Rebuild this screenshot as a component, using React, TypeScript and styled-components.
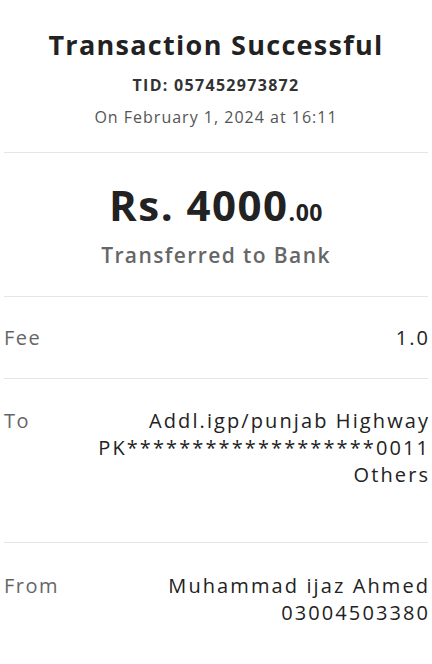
import React from "react";
import styled, { createGlobalStyle } from "styled-components";

const GlobalStyle = createGlobalStyle`
  html, body {
    margin: 0;
    padding: 0;
    background: #ffffff;
  }
  body {
    font-family: "Open Sans", "Liberation Sans", sans-serif;
    color: #222222;
  }
`;

const rows = [
  { label: "Fee", lines: ["1.0"], tall: false },
  {
    label: "To",
    lines: ["Addl.igp/punjab Highway", "PK*******************0011", "Others"],
    tall: true,
  },
  { label: "From", lines: ["Muhammad ijaz Ahmed", "03004503380"], tall: false },
];

const App = () => {
  return (
    <>
      <GlobalStyle />
      <Receipt>
        <Header>
          <Title>Transaction Successful</Title>
          <Tid>TID: 057452973872</Tid>
          <DateLine>On February 1, 2024 at 16:11</DateLine>
        </Header>
        <AmountBlock>
          <Amount>
            Rs. 4000<Cents>.00</Cents>
          </Amount>
          <Subtitle>Transferred to Bank</Subtitle>
        </AmountBlock>
        {rows.map((row) => (
          <Row key={row.label} $tall={row.tall}>
            <Label>{row.label}</Label>
            <Value>
              {row.lines.map((line) => (
                <span key={line}>{line}</span>
              ))}
            </Value>
          </Row>
        ))}
      </Receipt>
    </>
  );
};

export default App;

const Receipt = styled.div`
  display: flex;
  flex-direction: column;
  padding: 0 4px;
`;

const Header = styled.div`
  display: flex;
  flex-direction: column;
  align-items: center;
  padding: 27px 0 23px;
  border-bottom: 1.5px solid #e5e5e5;
`;

const Title = styled.h1`
  margin: 0;
  font-size: 27px;
  font-weight: 700;
  line-height: 36px;
  letter-spacing: 1.3px;
  color: #222222;
`;

const Tid = styled.div`
  margin-top: 10px;
  font-size: 16px;
  font-weight: 700;
  line-height: 24px;
  letter-spacing: 1.3px;
  color: #333333;
`;

const DateLine = styled.div`
  margin-top: 8px;
  font-size: 16px;
  line-height: 24px;
  letter-spacing: 1px;
  color: #555555;
`;

const AmountBlock = styled.div`
  display: flex;
  flex-direction: column;
  align-items: center;
  padding: 26px 0 27px;
  border-bottom: 1.5px solid #e5e5e5;
`;

const Amount = styled.div`
  font-size: 42px;
  font-weight: 700;
  line-height: 52px;
  letter-spacing: 1.5px;
  color: #222222;
`;

const Cents = styled.span`
  font-size: 23px;
  letter-spacing: 0.5px;
`;

const Subtitle = styled.div`
  margin-top: 3px;
  font-size: 21px;
  font-weight: 600;
  line-height: 28px;
  letter-spacing: 1.4px;
  color: #666666;
`;

const Row = styled.div<{ $tall: boolean }>`
  display: flex;
  justify-content: space-between;
  align-items: flex-start;
  padding: ${(p) => (p.$tall ? "28px 0 54px" : "27px 0 27px")};
  border-bottom: 1.5px solid #e5e5e5;

  &:last-child {
    border-bottom: none;
    padding-top: 29px;
  }
`;

const Label = styled.div`
  font-size: 20px;
  line-height: 27px;
  letter-spacing: 1.5px;
  color: #666666;
`;

const Value = styled.div`
  display: flex;
  flex-direction: column;
  align-items: flex-end;
  font-size: 20px;
  line-height: 27px;
  letter-spacing: 2.1px;
  color: #222222;
  text-align: right;
  margin-right: -2.1px;
`;
